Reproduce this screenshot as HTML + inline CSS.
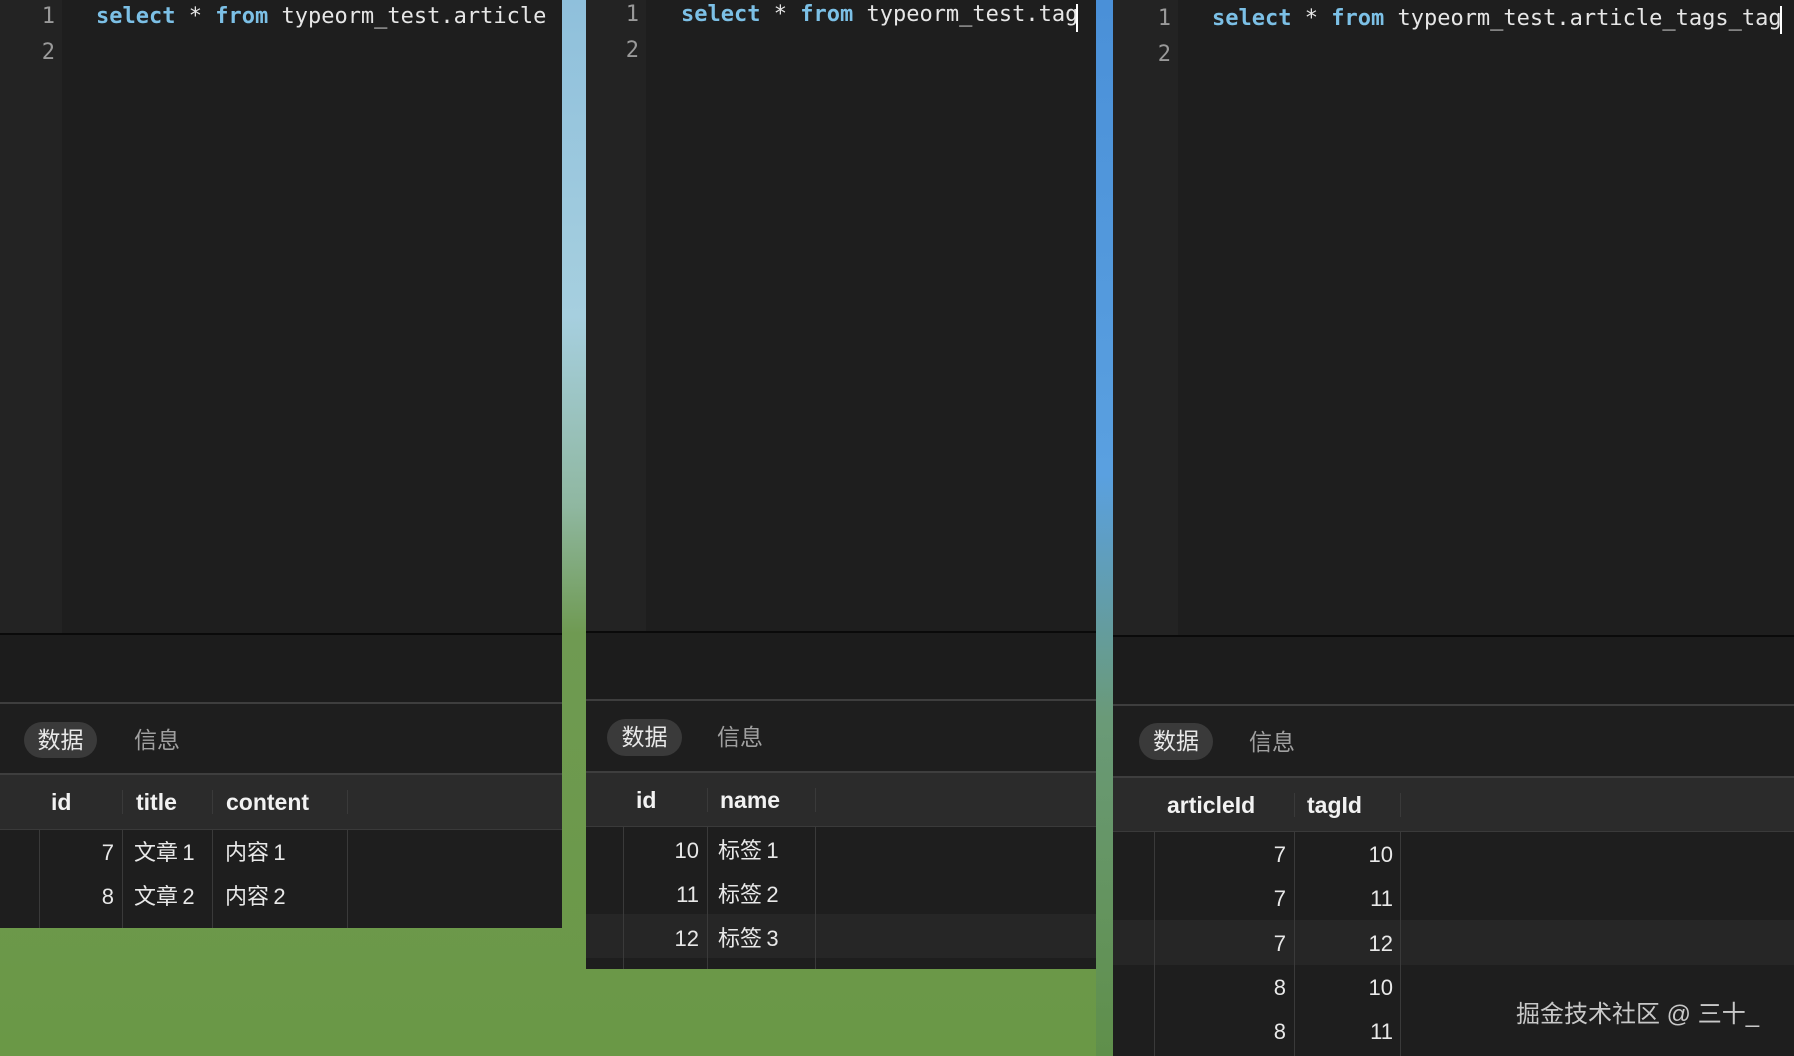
<!DOCTYPE html>
<html><head><meta charset="utf-8"><style>
*{margin:0;padding:0;box-sizing:border-box}
body{width:1794px;height:1056px;overflow:hidden;position:relative;
background:linear-gradient(180deg,#8fc0dc 0%,#a6cfdf 30%,#8fb7a0 48%,#6f9a52 60%,#6a9846 100%);
font-family:"Liberation Sans","Noto Sans CJK SC",sans-serif}
.p{position:absolute;background:#1e1e1e;overflow:hidden}
.g{position:absolute;left:0;top:0;background:#232323}
.ln{position:absolute;color:#9a9a9a;font:22px/30px "DejaVu Sans Mono",monospace;text-align:right}
.code{position:absolute;font:22px/30px "DejaVu Sans Mono",monospace;color:#e6e6e6;white-space:pre}
.k{color:#7cc0e6;font-weight:bold}
.edl{position:absolute;left:0;right:0;height:2px;background:#0a0a0a}
.band{position:absolute;left:0;right:0;background:#1c1c1c;border-bottom:2px solid #3e3e3e}
.pill{position:absolute;background:#3a3a3a;border-radius:20px;color:#e8e8e8;font-size:23px;text-align:center}
.tab2{position:absolute;color:#a0a0a0;font-size:23px;line-height:30px}
.hd{position:absolute;left:0;right:0;background:#2b2b2b;border-top:2px solid #3e3e3e;border-bottom:1px solid #3a3a3a}
.th{position:absolute;color:#f2f2f2;font-weight:bold;font-size:23px;line-height:30px}
.vl{position:absolute;width:1px;background:#3a3a3a}
.td{position:absolute;color:#e8e8e8;font-size:22px;line-height:30px;white-space:nowrap}
.r{text-align:right}
</style></head><body>

<!-- panel 1 -->
<div class="p" style="left:0;top:0;width:562px;height:928px">
 <div class="g" style="width:62px;height:634px"></div>
 <div class="ln" style="left:0;width:55px;top:2px">1</div>
 <div class="ln" style="left:0;width:55px;top:38px">2</div>
 <div class="code" style="left:96px;top:2px"><span class="k">select</span> * <span class="k">from</span> typeorm_test.article</div>
 <div class="edl" style="top:633px"></div>
 <div class="band" style="top:635px;height:69px"></div>
 <div class="pill" style="left:24px;top:722px;width:73px;height:36px;line-height:36px">数据</div>
 <div class="tab2" style="left:134px;top:725px">信息</div>
 <div class="hd" style="top:773px;height:57px"></div>
 <div class="th" style="left:51px;top:787px">id</div>
 <div class="th" style="left:136px;top:787px">title</div>
 <div class="th" style="left:226px;top:787px">content</div>
 <div class="vl" style="left:122px;top:790px;height:24px"></div>
 <div class="vl" style="left:212px;top:790px;height:24px"></div>
 <div class="vl" style="left:347px;top:790px;height:24px"></div>
 <div class="vl" style="left:39px;top:830px;height:98px"></div>
 <div class="vl" style="left:122px;top:830px;height:98px"></div>
 <div class="vl" style="left:212px;top:830px;height:98px"></div>
 <div class="vl" style="left:347px;top:830px;height:98px"></div>
 <div class="td r" style="left:60px;width:54px;top:838px">7</div>
 <div class="td" style="left:134px;top:838px">文章&thinsp;1</div>
 <div class="td" style="left:225px;top:838px">内容&thinsp;1</div>
 <div class="td r" style="left:60px;width:54px;top:882px">8</div>
 <div class="td" style="left:134px;top:882px">文章&thinsp;2</div>
 <div class="td" style="left:225px;top:882px">内容&thinsp;2</div>
</div>

<!-- panel 2 -->
<div class="p" style="left:586px;top:0;width:510px;height:969px">
 <div class="g" style="width:60px;height:632px"></div>
 <div class="ln" style="left:0;width:53px;top:0px">1</div>
 <div class="ln" style="left:0;width:53px;top:36px">2</div>
 <div class="code" style="left:95px;top:0px"><span class="k">select</span> * <span class="k">from</span> typeorm_test.tag</div>
 <div style="position:absolute;left:490px;top:4px;width:2px;height:28px;background:#fff"></div>
 <div class="edl" style="top:631px"></div>
 <div class="band" style="top:633px;height:68px"></div>
 <div class="pill" style="left:21px;top:719px;width:75px;height:37px;line-height:37px">数据</div>
 <div class="tab2" style="left:131px;top:722px">信息</div>
 <div class="hd" style="top:771px;height:56px"></div>
 <div class="th" style="left:50px;top:785px">id</div>
 <div class="th" style="left:134px;top:785px">name</div>
 <div class="vl" style="left:121px;top:788px;height:24px"></div>
 <div class="vl" style="left:229px;top:788px;height:24px"></div>
 <div style="position:absolute;left:0;right:0;top:914px;height:44px;background:#262626"></div>
 <div class="vl" style="left:37px;top:827px;height:142px"></div>
 <div class="vl" style="left:121px;top:827px;height:142px"></div>
 <div class="vl" style="left:229px;top:827px;height:142px"></div>
 <div class="td r" style="left:50px;width:63px;top:836px">10</div>
 <div class="td" style="left:132px;top:836px">标签&thinsp;1</div>
 <div class="td r" style="left:50px;width:63px;top:880px">11</div>
 <div class="td" style="left:132px;top:880px">标签&thinsp;2</div>
 <div class="td r" style="left:50px;width:63px;top:924px">12</div>
 <div class="td" style="left:132px;top:924px">标签&thinsp;3</div>
</div>

<!-- blue strip -->
<div style="position:absolute;left:1096px;top:0;width:17px;height:1056px;background:linear-gradient(180deg,#4a90d8 0%,#5aa0e0 45%,#6a9a78 68%,#5f8f4a 100%)"></div>

<!-- panel 3 -->
<div class="p" style="left:1113px;top:0;width:681px;height:1056px">
 <div class="g" style="width:65px;height:636px"></div>
 <div class="ln" style="left:0;width:58px;top:4px">1</div>
 <div class="ln" style="left:0;width:58px;top:40px">2</div>
 <div class="code" style="left:99px;top:4px"><span class="k">select</span> * <span class="k">from</span> typeorm_test.article_tags_tag</div>
 <div style="position:absolute;left:667px;top:6px;width:2px;height:28px;background:#fff"></div>
 <div class="edl" style="top:635px"></div>
 <div class="band" style="top:637px;height:69px"></div>
 <div class="pill" style="left:26px;top:723px;width:74px;height:37px;line-height:37px">数据</div>
 <div class="tab2" style="left:136px;top:727px">信息</div>
 <div class="hd" style="top:776px;height:56px"></div>
 <div class="th" style="left:54px;top:790px">articleId</div>
 <div class="th" style="left:194px;top:790px">tagId</div>
 <div class="vl" style="left:181px;top:793px;height:24px"></div>
 <div class="vl" style="left:287px;top:793px;height:24px"></div>
 <div style="position:absolute;left:0;right:0;top:920px;height:45px;background:#262626"></div>
 <div class="vl" style="left:41px;top:832px;height:224px"></div>
 <div class="vl" style="left:181px;top:832px;height:224px"></div>
 <div class="vl" style="left:287px;top:832px;height:224px"></div>
 <div class="td r" style="left:60px;width:113px;top:840px">7</div>
 <div class="td r" style="left:190px;width:90px;top:840px">10</div>
 <div class="td r" style="left:60px;width:113px;top:884px">7</div>
 <div class="td r" style="left:190px;width:90px;top:884px">11</div>
 <div class="td r" style="left:60px;width:113px;top:929px">7</div>
 <div class="td r" style="left:190px;width:90px;top:929px">12</div>
 <div class="td r" style="left:60px;width:113px;top:973px">8</div>
 <div class="td r" style="left:190px;width:90px;top:973px">10</div>
 <div class="td r" style="left:60px;width:113px;top:1017px">8</div>
 <div class="td r" style="left:190px;width:90px;top:1017px">11</div>
 <div style="position:absolute;left:403px;top:999px;color:#c8c8c8;font-size:24px;line-height:32px;white-space:nowrap">掘金技术社区 @ 三十_</div>
</div>
</body></html>
